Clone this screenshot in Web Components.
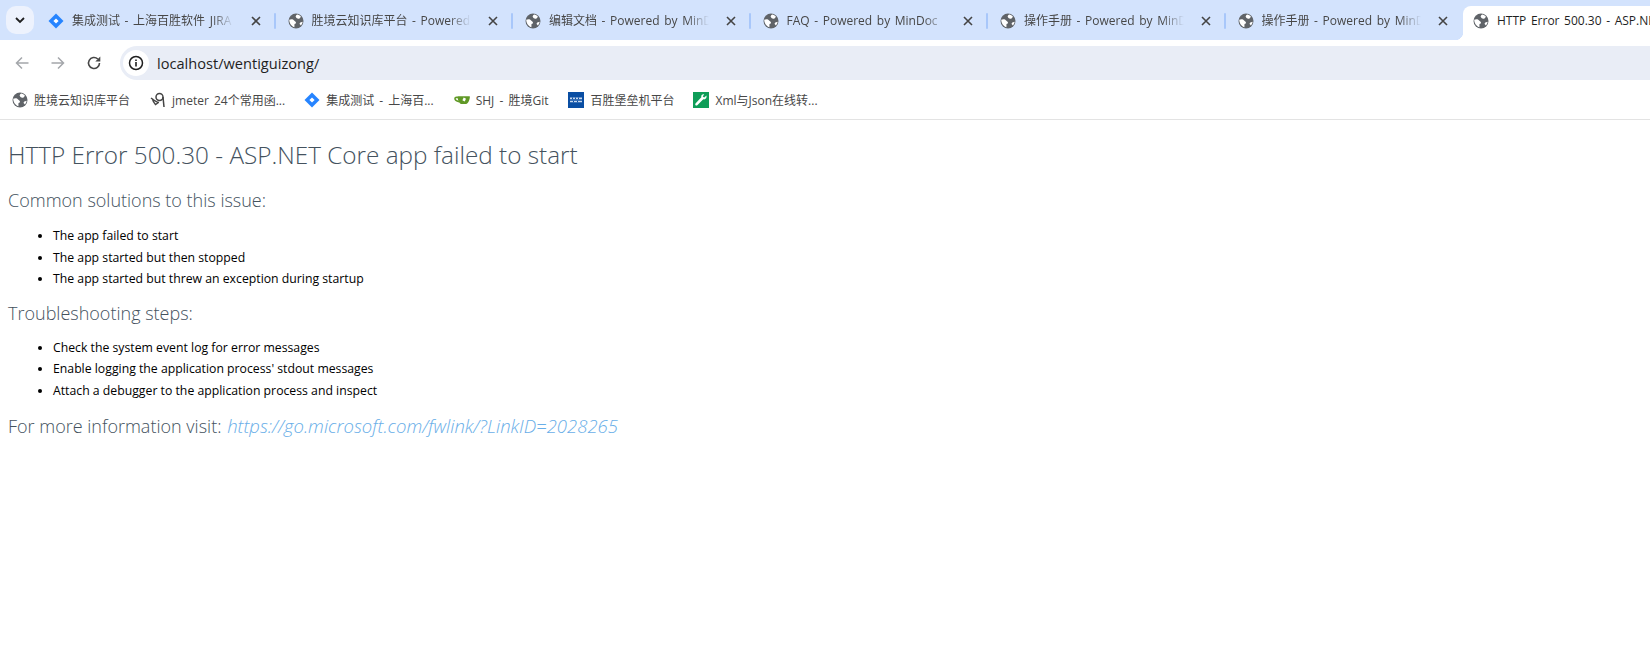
<!DOCTYPE html>
<html><head><meta charset="utf-8">
<style>
html,body{margin:0;padding:0;background:#fff;overflow:hidden;width:1650px;height:655px}
body{font-family:"Open Sans","Noto Sans CJK SC",sans-serif}
</style></head><body>
<template id="globe"><svg width="16" height="16" viewBox="0 0 16 16"><circle cx="8" cy="8" r="7.500" fill="#5f6368"/><path fill="#fff" d="M1.200 6.800c1.300-.7 2.800-.8 3.800-.2l2.800 2.500c.3.500.2 1.400-.5 1.700l-.8.200-.1 3.300c-1.800-.7-3.400-2-4.300-3.800-.6-1.200-.9-2.500-.9-3.700zM9.200 1.500c1.500.3 2.900 1.100 3.800 2.200l-1.500 1.800c-.9.600-2.200.3-3-.5l-.9-1.500c.2-.9.800-1.600 1.600-2zM12.300 9.500l2.400-.7c-.2 1.400-.8 2.700-1.800 3.700l-1.300-1.500c-.1-.6.200-1.200.7-1.500z"/></svg></template>
<template id="jira"><svg width="16" height="16" viewBox="0 0 16 16"><path fill="#2684ff" d="M8 .5 15.500 8 8 15.500.5 8z"/><path fill="#fff" d="M8 5.400 10.600 8 8 10.600 5.400 8z"/></svg></template>
<template id="jmeter"><svg width="16" height="16" viewBox="0 0 16 16" fill="none" stroke="#444" stroke-width="1.500"><circle cx="9.500" cy="5" r="3.500"/><path d="M13 5l1 10M1 6c2.500 2 5 4 8 4.500M2.500 7c.5 2 1.500 4 3 5.500l3-2"/></svg></template>
<template id="gitea"><svg width="16" height="16" viewBox="0 0 16 16"><path fill="none" stroke="#609926" stroke-width="1.600" d="M4 5.500C2 5.200.9 5.500 1 6.800c.1 1.500 2 2.400 4 2.800"/><path fill="#609926" d="M3.500 4.200h12c.3 0 .4.200.4.500-.2 3.400-1.800 7.300-4.700 7.300H8c-2.700 0-4.200-3.900-4.500-7.300 0-.3.100-.5.500-.5z"/><path fill="#fff" d="M9.700 5.500l2.300 1.200-1.300 2.700-2.300-1.200z"/></svg></template>
<template id="bs"><svg width="16" height="16" viewBox="0 0 16 16"><rect width="16" height="16" fill="#0a4ea3"/><path fill="#c9d9ee" d="M2 5.500h12v1.700H2zM2 8.800h12v1.500H2z"/><path fill="#0a4ea3" d="M4 5.500h1v1.700H4zM7 5.500h1v1.700H7zM10 5.500h1v1.700h-1zM5 8.800h1v1.500H5zM9 8.800h1v1.500H9z"/></svg></template>
<template id="wrench"><svg width="16" height="16" viewBox="0 0 16 16"><rect width="16" height="16" fill="#0f9d58"/><path fill="#fff" d="M13.500 3.500l-2.300 2-1.500-1 1.500-2.200C9.600 1.700 7.800 3 8.300 5.200L2.500 11.500c-.9 1.200.6 2.700 1.800 1.800l6-6c2 .6 3.800-1.200 3.200-3.800z"/></svg></template>

<script>
const icon = n=>document.getElementById(n).innerHTML;

class BTab extends HTMLElement{
  connectedCallback(){
    const active=this.hasAttribute('active'), last=this.hasAttribute('nosep');
    const r=this.attachShadow({mode:'open'});
    r.innerHTML=`<style>
      :host{display:flex;flex:0 0 237.500px;min-width:0;box-sizing:border-box;height:34px;align-items:center;padding:0 0 4px ${this.hasAttribute('first')?10:12}px;color:#474747;font-size:12px;word-spacing:1.500px;position:relative}
      .t{flex:1;min-width:0;margin-left:8px;white-space:nowrap;overflow:hidden;-webkit-mask-image:linear-gradient(to right,#000 calc(100% - 22px),transparent);mask-image:linear-gradient(to right,#000 calc(100% - 22px),transparent);line-height:16px}
      svg{display:block;flex:none}
      .x{flex:none;margin-left:14px;margin-right:10px;width:16px;height:16px}
      .s{flex:none;width:2px;height:16px;background:#a8c7fa;border-radius:1px;visibility:${last||active?'hidden':'visible'}}
      :host([active]){background:#fff;border-radius:8px 8px 0 0;color:#1f1f1f;flex:0 0 300px;padding-left:10px}
      :host([active]) .t{flex:none;overflow:visible;-webkit-mask-image:none;mask-image:none}
      :host([active])::before{content:"";position:absolute;left:-8px;bottom:0;width:8px;height:8px;background:radial-gradient(circle at 0 0,transparent 8px,#fff 8.500px)}
    </style>${icon(this.getAttribute('icon')||'globe')}<span class="t"><slot></slot></span>
    ${active?'':`<svg class="x" viewBox="0 0 16 16" fill="none" stroke="#444" stroke-width="1.600"><path d="M4 4l8 8M12 4l-8 8"/></svg><span class="s"></span>`}`;
  }
}
customElements.define('b-tab',BTab);

class BStrip extends HTMLElement{
  connectedCallback(){
    const r=this.attachShadow({mode:'open'});
    r.innerHTML=`<style>
      :host{display:flex;height:40px;box-sizing:border-box;padding:6px 0 0 6px;background:#d3e3fd;overflow:hidden}
      .m{flex:none;width:28px;height:28px;border-radius:10px;background:#edf2fd;display:flex;align-items:center;justify-content:center;margin-right:4px}
    </style><div class="m"><svg width="12" height="12" viewBox="0 0 12 12" fill="none" stroke="#1f1f1f" stroke-width="1.800"><path d="M2 4l4 4 4-4"/></svg></div><slot></slot>`;
  }
}
customElements.define('b-strip',BStrip);

class BToolbar extends HTMLElement{
  connectedCallback(){
    const r=this.attachShadow({mode:'open'});
    r.innerHTML=`<style>
      :host{display:flex;height:46px;align-items:center;background:#fff;padding-left:14px;box-sizing:border-box}
      svg{display:block;flex:none}
      .n{margin-right:20px}
      .addr{flex:1;height:34px;background:#e9edf6;border-radius:17px 0 0 17px;display:flex;align-items:center;padding-left:3px;font-size:14.600px;color:#1f1f1f}
      .i{width:26px;height:26px;border-radius:50%;background:#fff;display:flex;align-items:center;justify-content:center;margin-right:8px}
    </style>
    <svg class="n" width="16" height="16" viewBox="0 0 16 16" fill="none" stroke="#a4a7ab" stroke-width="1.500"><path d="M14.500 8H2.500M8 2.500 2.500 8 8 13.500"/></svg>
    <svg class="n" width="16" height="16" viewBox="0 0 16 16" fill="none" stroke="#a4a7ab" stroke-width="1.500"><path d="M1.500 8h12M8 2.500 13.500 8 8 13.500"/></svg>
    <svg style="margin-right:18px" width="16" height="16" viewBox="0 0 16 16" fill="none" stroke="#474747" stroke-width="1.600"><path d="M13.500 8A5.500 5.500 0 1 1 11.800 4"/><path fill="#474747" stroke="none" d="M14.300 1.500v5h-5z"/></svg>
    <div class="addr"><div class="i"><svg width="16" height="16" viewBox="0 0 16 16"><circle cx="8" cy="8" r="6.500" fill="none" stroke="#1f1f1f" stroke-width="1.500"/><path fill="#1f1f1f" d="M7.200 7h1.600v4.500H7.200zM7.200 4.500h1.600v1.600H7.200z"/></svg></div><slot></slot></div>`;
  }
}
customElements.define('b-toolbar',BToolbar);

class BMark extends HTMLElement{
  connectedCallback(){
    const r=this.attachShadow({mode:'open'});
    r.innerHTML=`<style>
      :host{display:flex;align-items:center;gap:6px;font-size:12px;word-spacing:2px;color:#474747;white-space:nowrap;margin-right:${this.getAttribute('gap')||20}px}
      svg{display:block;flex:none}
    </style>${icon(this.getAttribute('icon'))}<slot></slot>`;
  }
}
customElements.define('b-mark',BMark);

class BBar extends HTMLElement{
  connectedCallback(){
    this.attachShadow({mode:'open'}).innerHTML=`<style>
      :host{display:flex;height:34px;align-items:center;padding:0 0 6px 12px;box-sizing:border-box;background:#fff;border-bottom:1px solid #e3e3e3}
    </style><slot></slot>`;
  }
}
customElements.define('b-bar',BBar);

class ErrPage extends HTMLElement{
  connectedCallback(){
    this.attachShadow({mode:'open'}).innerHTML=`<style>
      :host{display:block;padding:0 8px;color:#000;font-family:"Open Sans",sans-serif}
      ::slotted(h1){font-size:24.300px;font-weight:300;color:#44525e;margin:20px 0 0;line-height:30px}
    </style><slot></slot>`;
  }
}
customElements.define('err-page',ErrPage);

class ErrH2 extends HTMLElement{
  connectedCallback(){
    this.attachShadow({mode:'open'}).innerHTML=`<style>
      :host{display:block;font-size:18px;font-weight:300;color:#44525e;line-height:24px;margin-top:${this.getAttribute('top')||15}px}
    </style><slot></slot>`;
  }
}
customElements.define('err-h2',ErrH2);

class ErrList extends HTMLElement{
  connectedCallback(){
    this.attachShadow({mode:'open'}).innerHTML=`<style>
      :host{display:block;margin-top:${this.getAttribute('top')||12}px;padding-left:45px;font-size:12.250px;line-height:21.500px;color:#000}
      ::slotted(div){display:list-item;list-style:disc}
    </style><slot></slot>`;
  }
}
customElements.define('err-list',ErrList);

class ErrLink extends HTMLElement{
  connectedCallback(){
    this.attachShadow({mode:'open'}).innerHTML=`<style>
      :host{display:inline;font-size:18.500px;font-style:italic;color:#69aee8;margin-left:1px}
      a{color:inherit;text-decoration:none}
    </style><a href="#"><slot></slot></a>`;
  }
}
customElements.define('err-link',ErrLink);
</script>

<b-strip>
<b-tab first icon="jira">集成测试 - 上海百胜软件 JIRA</b-tab>
<b-tab>胜境云知识库平台 - Powered by MinDoc</b-tab>
<b-tab>编辑文档 - Powered by MinDoc</b-tab>
<b-tab>FAQ - Powered by MinDoc</b-tab>
<b-tab>操作手册 - Powered by MinDoc</b-tab>
<b-tab nosep>操作手册 - Powered by MinDoc</b-tab>
<b-tab active>HTTP Error 500.30 - ASP.NET Core app failed to start</b-tab>
</b-strip>
<b-toolbar>localhost/wentiguizong/</b-toolbar>
<b-bar>
<b-mark icon="globe">胜境云知识库平台</b-mark>
<b-mark icon="jmeter" gap="19">jmeter 24个常用函...</b-mark>
<b-mark icon="jira">集成测试 - 上海百...</b-mark>
<b-mark icon="gitea">SHJ - 胜境Git</b-mark>
<b-mark icon="bs" gap="19">百胜堡垒机平台</b-mark>
<b-mark icon="wrench">Xml与Json在线转...</b-mark>
</b-bar>
<err-page>
<h1>HTTP Error 500.30 - ASP.NET Core app failed to start</h1>
<err-h2 top="18">Common solutions to this issue:</err-h2>
<err-list top="13"><div>The app failed to start</div><div>The app started but then stopped</div><div>The app started but threw an exception during startup</div></err-list>
<err-h2 top="11">Troubleshooting steps:</err-h2>
<err-list><div>Check the system event log for error messages</div><div>Enable logging the application process' stdout messages</div><div>Attach a debugger to the application process and inspect</div></err-list>
<err-h2 top="13">For more information visit: <err-link>https://go.microsoft.com/fwlink/?LinkID=2028265</err-link></err-h2>
</err-page>
</body></html>
